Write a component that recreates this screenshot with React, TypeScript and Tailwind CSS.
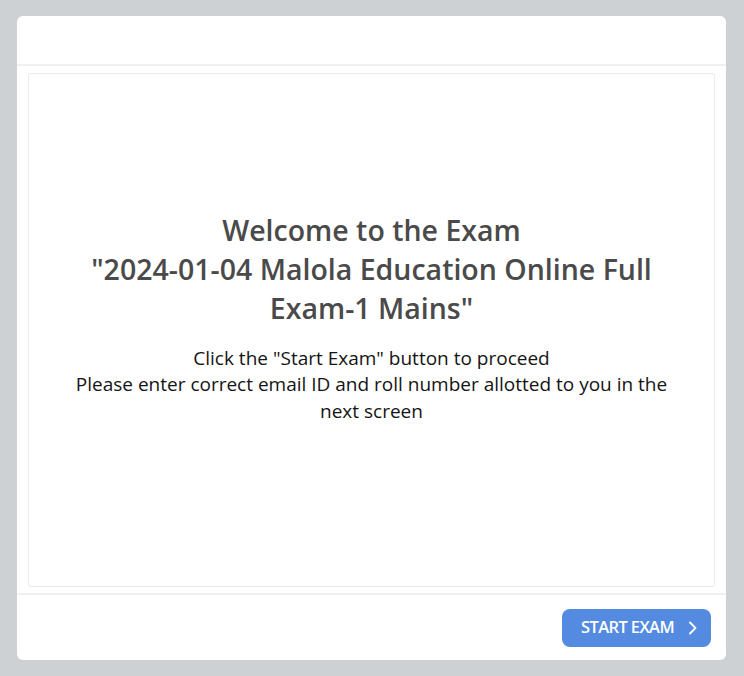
import React from "react";

export default function App() {
  return (
    <div
      className="w-[744px] h-[676px] bg-[#ced1d4] pt-[16px] pl-[17px] pr-[18px] pb-[16px]"
      style={{ fontFamily: '"Open Sans", "Noto Sans", sans-serif' }}
    >
      <div className="h-full bg-white rounded-[6px] flex flex-col">
        <div className="h-[50px] shrink-0 border-b-2 border-[#f0f0f0]" />
        <div className="flex-1 px-[11px] pt-[7px] pb-[6px] flex flex-col">
          <div className="flex-1 border border-[#ebebeb] rounded-[3px] flex flex-col items-center justify-center px-[30px] pb-[25px] text-center">
            <h1 className="text-[28.5px] leading-[39px] font-semibold text-[#4a4a4a]">
              Welcome to the Exam
              <br />
              "2024-01-04 Malola Education Online Full Exam-1 Mains"
            </h1>
            <p className="mt-[17px] text-[19px] leading-[26.5px] text-[#141414]">
              Click the "Start Exam" button to proceed
              <br />
              Please enter correct email ID and roll number allotted to you in the next screen
            </p>
          </div>
        </div>
        <div className="h-[67px] shrink-0 border-t-2 border-[#f0f0f0] flex items-center justify-end pr-[15px]">
          <button className="h-[38px] w-[149px] bg-[#548be0] rounded-[8px] text-white text-[16.5px] font-semibold tracking-[-0.6px] flex items-center justify-center gap-[14px] pl-[6px]">
            START EXAM
            <svg width="10" height="16" viewBox="0 0 10 16" fill="none">
              <path d="M2 2.5l5.5 5.5-5.5 5.5" stroke="white" strokeWidth="1.8" strokeLinecap="round" strokeLinejoin="round" />
            </svg>
          </button>
        </div>
      </div>
    </div>
  );
}
